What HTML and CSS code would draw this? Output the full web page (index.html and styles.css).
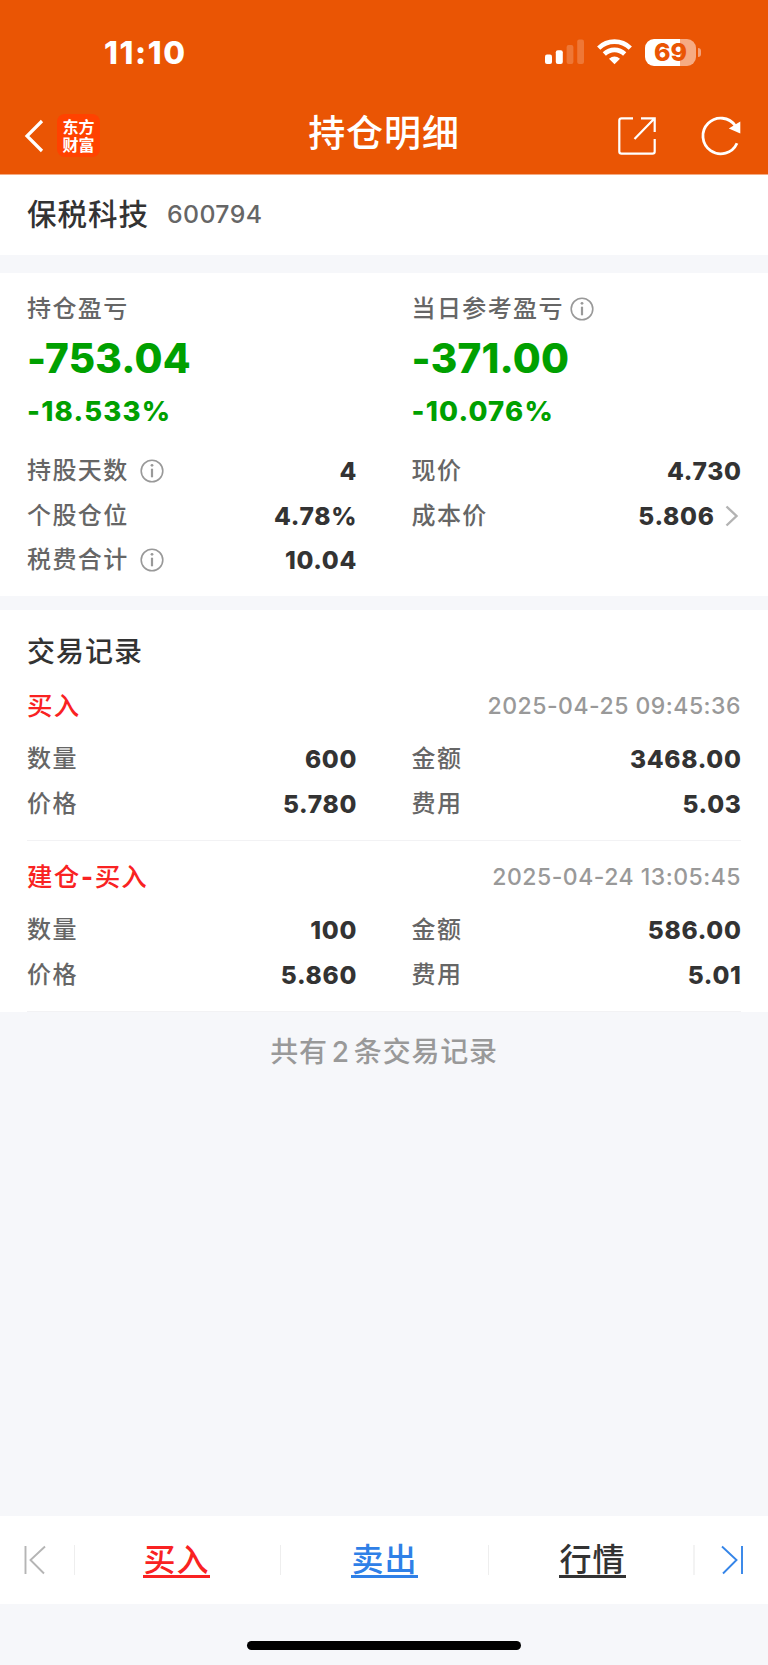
FILE: index.html
```html
<!DOCTYPE html>
<html lang="zh-CN">
<head>
  <meta charset="UTF-8">
  <meta name="viewport" content="width=device-width, initial-scale=1.0">
  <title>持仓明细</title>
  <link rel="stylesheet" href="styles.css">
</head>
<body>
  <!-- Header -->
  <header class="header">
    <div class="status-bar">
      <span class="time">11:10</span>
      <div class="status-icons">
        <svg class="signal" width="40" height="26" viewBox="0 0 40 26" fill="#fff">
          <rect x="0" y="15.5" width="7" height="9.5" rx="2"/>
          <rect x="10.8" y="11.3" width="7" height="13.7" rx="2"/>
          <rect x="21.6" y="6" width="6.8" height="19" rx="2" opacity=".2"/>
          <rect x="32.2" y="0.5" width="6.8" height="24.5" rx="2" opacity=".2"/>
        </svg>
        <svg class="wifi" width="35" height="26" viewBox="0 0 35 26" fill="none" stroke="#fff" stroke-width="4.6">
          <path d="M1.7 9.1A22.6 22.6 0 0 1 33.3 9.1"/>
          <path d="M7.3 15A14.6 14.6 0 0 1 27.7 15"/>
          <path d="M17.5 25.2L12 19.8Q17.5 15.2 23 19.8Z" fill="#fff" stroke="none"/>
        </svg>
        <div class="battery">
          <span class="battery-body">69</span>
          <span class="battery-tip"></span>
        </div>
      </div>
    </div>
    <div class="nav-bar">
      <div class="nav-side">
        <svg class="back" width="20" height="34" viewBox="0 0 20 34" fill="none" stroke="#fff" stroke-width="3.2">
          <path d="M18 2L3 17L18 32"/>
        </svg>
        <div class="logo">东方<br>财富</div>
      </div>
      <h1 class="title">持仓明细</h1>
      <div class="nav-side nav-right">
        <svg width="40" height="40" viewBox="0 0 40 40" fill="none" stroke="#fff" stroke-width="2.2">
          <path d="M16 2.3H4.5Q2.3 2.3 2.3 4.5V35.5Q2.3 37.7 4.5 37.7H35.5Q37.7 37.7 37.7 35.5V23"/>
          <path d="M24 2.3H37.7V16M37.2 2.8L17.5 23"/>
        </svg>
        <svg width="42" height="42" viewBox="0 0 42 42" fill="none" stroke="#fff" stroke-width="2.8">
          <path d="M37 28.2A17.8 17.8 0 1 1 35.5 11"/>
          <path d="M40.3 6.5V18.5L28.8 13.5Z" fill="#fff" stroke="none"/>
        </svg>
      </div>
    </div>
  </header>

  <!-- Stock -->
  <section class="stock">
    <span class="stock-name">保税科技</span>
    <span class="stock-code">600794</span>
  </section>

  <!-- Position summary -->
  <section class="summary">
    <div class="columns">
      <div class="profit">
        <div class="label">持仓盈亏</div>
        <div class="amount">-753.04</div>
        <div class="percent">-18.533%</div>
      </div>
      <div class="profit">
        <div class="label">当日参考盈亏
          <svg class="info info-near" viewBox="0 0 24 24"><circle cx="12" cy="12" r="10.8"/><path d="M12 9.7V18.3"/><circle class="dot" cx="12" cy="6.3" r="1.4"/></svg>
        </div>
        <div class="amount">-371.00</div>
        <div class="percent">-10.076%</div>
      </div>
    </div>
    <div class="columns">
      <div class="row">
        <span class="label">持股天数
          <svg class="info" viewBox="0 0 24 24"><circle cx="12" cy="12" r="10.8"/><path d="M12 9.7V18.3"/><circle class="dot" cx="12" cy="6.3" r="1.4"/></svg>
        </span>
        <span class="value">4</span>
      </div>
      <div class="row"><span class="label">现价</span><span class="value">4.730</span></div>
      <div class="row"><span class="label">个股仓位</span><span class="value">4.78%</span></div>
      <div class="row">
        <span class="label">成本价</span>
        <span class="value value-link">5.806
          <svg class="arrow" width="14" height="22" viewBox="0 0 14 22" fill="none" stroke="#b3b3b3" stroke-width="2.4"><path d="M1.5 1.5L11.5 11L1.5 20.5"/></svg>
        </span>
      </div>
      <div class="row">
        <span class="label">税费合计
          <svg class="info" viewBox="0 0 24 24"><circle cx="12" cy="12" r="10.8"/><path d="M12 9.7V18.3"/><circle class="dot" cx="12" cy="6.3" r="1.4"/></svg>
        </span>
        <span class="value">10.04</span>
      </div>
    </div>
  </section>

  <!-- Trade records -->
  <section class="records">
    <h2 class="records-title">交易记录</h2>
    <div class="record">
      <div class="record-head"><span class="record-type">买入</span><span class="record-time">2025-04-25 09:45:36</span></div>
      <div class="columns">
        <div class="row"><span class="label">数量</span><span class="value">600</span></div>
        <div class="row"><span class="label">金额</span><span class="value">3468.00</span></div>
        <div class="row"><span class="label">价格</span><span class="value">5.780</span></div>
        <div class="row"><span class="label">费用</span><span class="value">5.03</span></div>
      </div>
    </div>
    <div class="record">
      <div class="record-head"><span class="record-type">建仓<b class="dash">-</b>买入</span><span class="record-time">2025-04-24 13:05:45</span></div>
      <div class="columns">
        <div class="row"><span class="label">数量</span><span class="value">100</span></div>
        <div class="row"><span class="label">金额</span><span class="value">586.00</span></div>
        <div class="row"><span class="label">价格</span><span class="value">5.860</span></div>
        <div class="row"><span class="label">费用</span><span class="value">5.01</span></div>
      </div>
    </div>
  </section>
  <p class="total">共有<span class="count">2</span>条交易记录</p>

  <!-- Bottom bar -->
  <nav class="bottom-bar">
    <div class="page-btn">
      <svg width="24" height="30" viewBox="0 0 24 30" fill="none" stroke="#b5b5b5" stroke-width="1.9"><path d="M2.5 1V29M22 1.5L7.5 15L21 28.5"/></svg>
    </div>
    <div class="tab tab-buy"><a class="link buy">买入</a></div>
    <div class="tab tab-sell"><a class="link sell">卖出</a></div>
    <div class="tab tab-quote"><a class="link quote">行情</a></div>
    <div class="page-btn next">
      <svg width="24" height="30" viewBox="0 0 24 30" fill="none" stroke="#3585e8" stroke-width="1.9"><path d="M22 1V29M2 1.5L16.5 15L3 28.5"/></svg>
    </div>
  </nav>
  <div class="home-area"><div class="home-indicator"></div></div>
</body>
</html>
```

FILE: styles.css
```css
* {
  margin: 0;
  padding: 0;
  box-sizing: border-box;
}

body {
  display: flex;
  flex-direction: column;
  height: 1665px;
  background-color: #f6f7fa;
  color: #333;
  font-family: Inter, "Noto Sans CJK SC", sans-serif;
  font-weight: 500;
}

svg {
  display: block;
  flex: none;
}

/* Header */
.header {
  height: 175px;
  border-bottom: 1px solid #f4aa82;
  background-color: #ea5504;
  color: #fff;
}

.status-bar {
  display: flex;
  justify-content: space-between;
  height: 98px;
  padding: 36px 67px 0 104px;
}

.time {
  height: 34px;
  line-height: 34px;
  font-size: 31.5px;
  font-weight: 800;
  letter-spacing: 1.6px;
}

.status-icons {
  display: flex;
  height: 32px;
  align-items: center;
}

.wifi {
  margin-left: 12px;
}

.battery {
  display: flex;
  align-items: center;
  margin-left: 13px;
}

.battery-body {
  width: 51px;
  height: 27px;
  border-radius: 9px;
  background: linear-gradient(to right, #fff 69%, #f6ab83 69%);
  color: #ea5504;
  font-size: 25px;
  font-weight: 800;
  line-height: 27px;
  text-align: center;
}

.battery-tip {
  width: 3px;
  height: 9px;
  margin-left: 2px;
  border-radius: 0 4px 4px 0;
  background-color: #f4a27a;
}

.nav-bar {
  display: flex;
  align-items: center;
  justify-content: space-between;
  height: 76px;
  padding: 0 26px 0 24px;
}

.nav-side {
  display: flex;
  align-items: center;
  width: 160px;
}

.nav-right {
  justify-content: flex-end;
  gap: 43px;
}

.logo {
  width: 43px;
  height: 43px;
  margin: 0 0 2px 13px;
  padding-top: 3px;
  border-radius: 8px;
  background-color: #ff4200;
  font-family: "Noto Sans CJK SC", sans-serif;
  font-size: 16px;
  font-weight: 700;
  line-height: 18.5px;
  text-align: center;
}

.title {
  padding: 0 0 4px 2px;
  font-size: 37px;
  font-weight: 500;
  line-height: 50px;
  letter-spacing: 0.9px;
}

/* Stock */
.stock {
  display: flex;
  align-items: center;
  height: 80px;
  padding: 0 27px 2px;
  background-color: #fff;
}

.stock-name {
  font-size: 29.5px;
  line-height: 40px;
  letter-spacing: 1px;
}

.stock-code {
  margin-left: 18px;
  color: #666;
  font-size: 24.8px;
  line-height: 42px;
  letter-spacing: 0.4px;
}

/* Summary */
.summary {
  height: 323px;
  margin-top: 18px;
  padding: 18px 27px 0;
  background-color: #fff;
}

.columns {
  display: grid;
  grid-template-columns: 1fr 1fr;
  column-gap: 55px;
}

.profit {
  height: 158px;
}

.label {
  display: flex;
  align-items: center;
  height: 36px;
  color: #666;
  font-size: 24px;
  line-height: 38px;
  letter-spacing: 1.4px;
}

.info {
  width: 24px;
  height: 24px;
  margin-left: 11px;
  fill: none;
  stroke: #999;
  stroke-width: 1.6;
}

.info path {
  stroke-width: 2.2;
}

.info .dot {
  fill: #999;
  stroke: none;
}

.info-near {
  margin-left: 6px;
}

.profit .label {
  height: 35px;
  line-height: 36px;
}

.amount {
  height: 63px;
  color: #00a000;
  font-size: 40.5px;
  font-weight: 800;
  line-height: 65px;
  letter-spacing: 0.2px;
}

.percent {
  height: 42px;
  color: #00a000;
  font-size: 27.5px;
  font-weight: 800;
  line-height: 44px;
  letter-spacing: 1.2px;
}

.row {
  display: flex;
  align-items: center;
  justify-content: space-between;
  height: 44.6px;
}

.value {
  display: flex;
  align-items: center;
  margin-right: -0.6px;
  font-size: 24.5px;
  font-weight: 800;
  line-height: 36px;
  letter-spacing: 0.7px;
}

.arrow {
  margin: 0 3px 0 10px;
}

/* Records */
.records {
  height: 402px;
  margin-top: 14px;
  padding: 20px 27px 0;
  background-color: #fff;
}

.records-title {
  height: 44px;
  font-size: 28px;
  font-weight: 500;
  line-height: 44px;
  letter-spacing: 1px;
}

.record {
  height: 171px;
  border-bottom: 1px solid #f2f2f4;
}

.records-title + .record {
  height: 167px;
}

.records-title + .record .record-head {
  padding-top: 0;
  height: 63px;
}

.record-head {
  display: flex;
  align-items: center;
  justify-content: space-between;
  height: 67px;
  padding-top: 4px;
}

.record-type {
  color: #f92222;
  font-size: 25.5px;
  line-height: 36px;
  letter-spacing: 1.2px;
}

.dash {
  margin: 0 0.5px;
  font-weight: 800;
}

.record-time {
  color: #999;
  font-size: 23px;
  line-height: 36px;
  letter-spacing: 0.5px;
}

.total {
  height: 81px;
  color: #999;
  font-size: 28px;
  line-height: 81px;
  letter-spacing: 0.8px;
  text-align: center;
}

.count {
  margin: 0 4px;
}

/* Bottom bar */
.bottom-bar {
  display: flex;
  align-items: center;
  height: 88px;
  margin-top: auto;
  background-color: #fff;
}

.page-btn {
  display: flex;
  width: 75px;
  height: 30px;
  padding-left: 23px;
  border-right: 1px solid #eee;
}

.next {
  width: 73px;
  padding-left: 25px;
  border-right: none;
}

.tab {
  display: flex;
  align-items: center;
  justify-content: center;
  height: 30px;
  border-right: 1px solid #eee;
}

.tab-buy {
  width: 206px;
  padding-right: 2px;
}

.tab-sell {
  width: 208px;
}

.tab-quote {
  width: 206px;
  padding-left: 3px;
  border-right: 2px solid #f3f3f3;
}

.link {
  padding-top: 2px;
  border-bottom: 3px solid;
  font-size: 32px;
  line-height: 30px;
  letter-spacing: 1px;
}

.buy {
  color: #f92222;
}

.sell {
  color: #2f80e7;
}

.home-area {
  height: 61px;
  padding-top: 37px;
}

.home-indicator {
  width: 274px;
  height: 9px;
  margin: 0 auto;
  border-radius: 5px;
  background-color: #000;
}
```
